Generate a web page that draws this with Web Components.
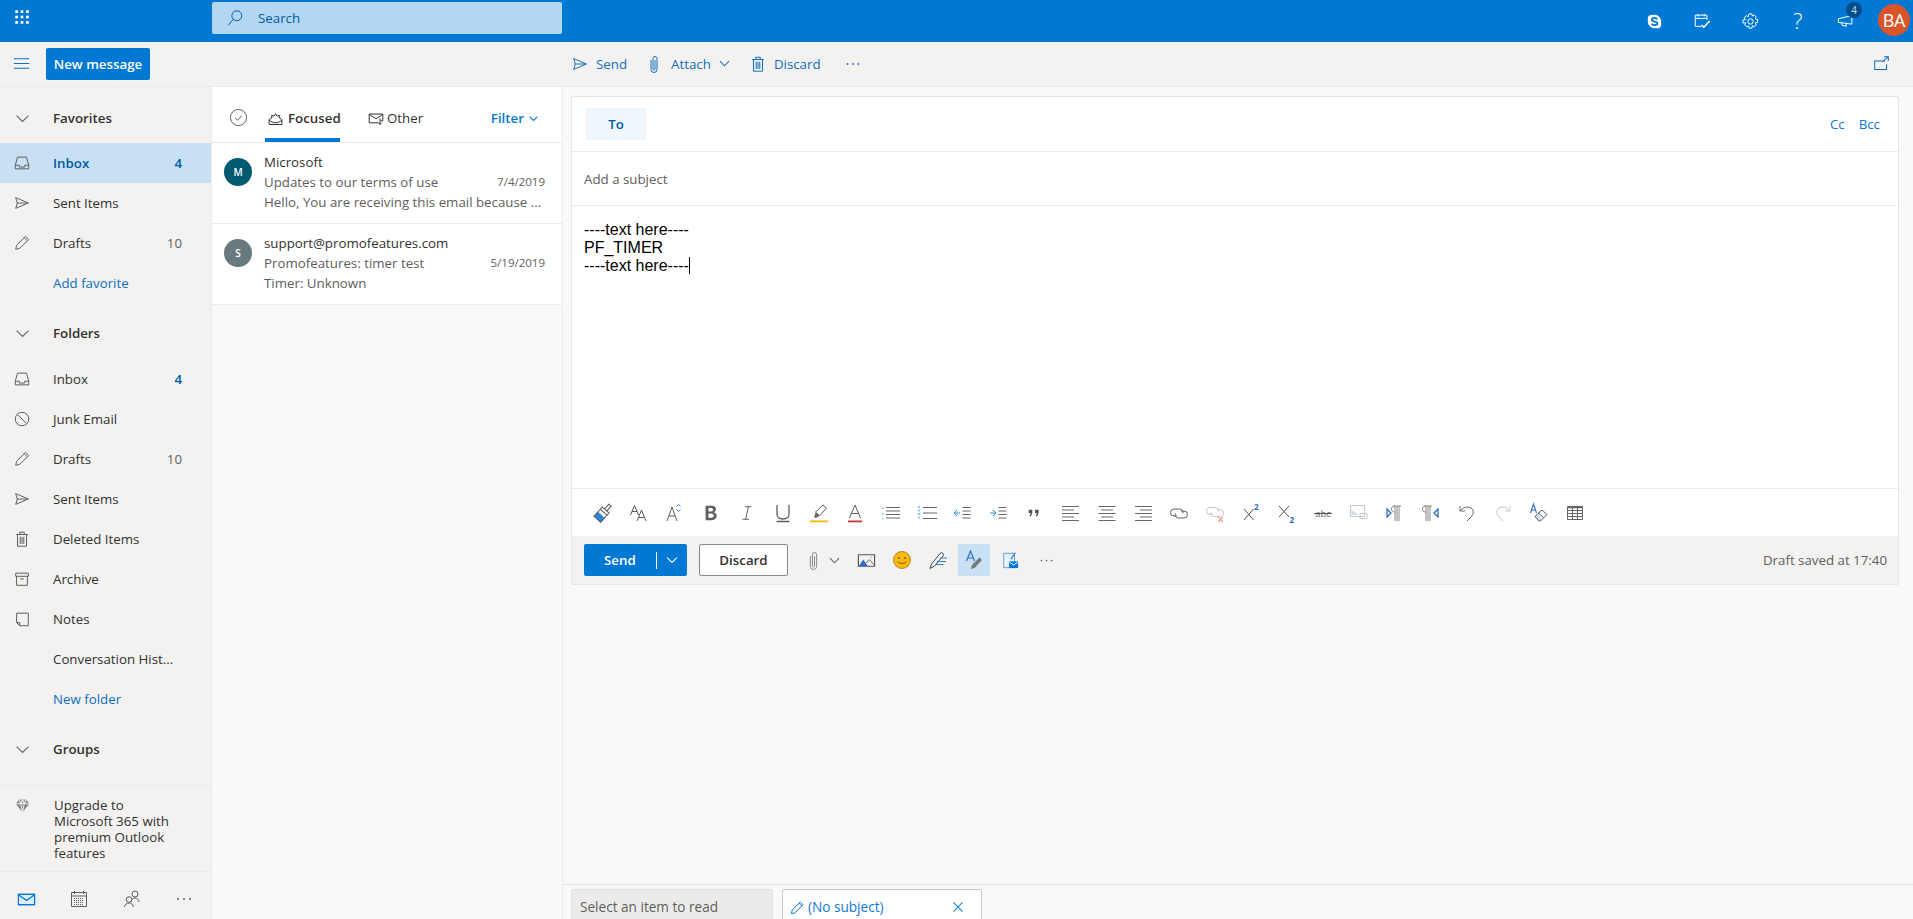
<!DOCTYPE html>
<html lang="en"><head><meta charset="utf-8"><title>Mail</title>
<style>
html,body{margin:0;padding:0;height:919px;overflow:hidden;background:#faf9f8;font-family:"Open Sans","Noto Sans",sans-serif;font-size:13.3px;color:#323130}
</style></head><body>
<x-app></x-app>
<script>
const S=(d,extra='')=>`<path d="${d}" ${extra}/>`;
const ICONS={
waffle:[...Array(9)].map((_,i)=>`<rect x="${2.5+(i%3)*6}" y="${2.5+Math.floor(i/3)*6}" width="3" height="3" fill="currentColor" stroke="none"/>`).join(''),
search:`<circle cx="12" cy="7.5" r="5.5"/>`+S('M8 11.5L2.5 18'),
hamburger:S('M1 4.5h18M1 10h18M1 15.5h18'),
chevron:S('M3 6.5l7 7 7-7'),
inbox:S('M5 3.5h10l2.5 9v4h-15v-4zM2.5 12.5h4.5v2h6v-2h4.5'),
send:S('M3 4l14 6-14 6 1.8-6zM4.8 10H17'),
pencil:S('M3 17l1-4.5L14 2.5l3.5 3.5-10 10zM12.5 4l3.5 3.5'),
junk:`<circle cx="10" cy="10" r="7.5"/>`+S('M4.8 4.8l10.4 10.4'),
trash:S('M3.5 5h13M7.5 5V2.5h5V5M5 5v13h10V5M8 7.5v8M10 7.5v8M12 7.5v8'),
archive:S('M3 3.5h14v3.5H3zM4 7v10h12V7M8 10h4'),
notes:S('M4 3.5h13v14H7.5L4 14zM4 14h3.5v3.5'),
gem:`<path fill="currentColor" stroke="none" d="M6 3h8l4 5-8 10-8-10z" opacity=".75"/><path stroke="#f3f2f1" d="M2 8h16M6 3l2 5 2 10 2-10 2-5M8 8l2-5 2 5"/>`,
mail:`<rect x="1.5" y="4.5" width="17" height="11" fill="#deecf9"/>`+S('M1.5 4.5h17v11h-17zM1.5 5l8.5 6 8.5-6','stroke-width="1.3"'),
calendar:S('M2.5 3.5h15v14h-15zM2.5 7h15M5.5 2v3M14.5 2v3')+`<path stroke-dasharray="1 1" d="M5 9.5h10M5 11.5h10M5 13.5h10M5 15.5h10"/>`,
people:`<circle cx="13" cy="5" r="3"/>`+S('M9 13c.5-2.500 2-4 4-4s3.800 1.500 4 4')+`<circle cx="7" cy="10.500" r="2.800"/>`+S('M2.500 18c.300-2.500 2-4 4.500-4s4 1.500 4.300 4'),
dots:`<circle cx="4" cy="10" r="1" fill="currentColor" stroke="none"/><circle cx="10" cy="10" r="1" fill="currentColor" stroke="none"/><circle cx="16" cy="10" r="1" fill="currentColor" stroke="none"/>`,
circlecheck:`<circle cx="10" cy="10" r="8.500"/>`+S('M6.500 10.500l2.500 2.500 4.500-5'),
focused:S('M1.500 11.500l3.500-2.500M18.500 11.500l-3.500-2.500M1.500 11.500v6.500h17v-6.500M1.500 12.500l5.500 3h6l5.500-3M5 9.500V5.500l3 1.500 2-3.500 2 3.500 3-1.500v4'),
other:S('M16 13.500h2.500V5H1.500v11H13M1.500 5.500L10 11l8.500-5.500M15 10.500V18M13 16l2 2 2-2'),
clip:S('M7 6v9.500a3 3 0 0 0 6 0V4.500a2 2 0 0 0-4 0V15a1 1 0 0 0 2 0V6'),
popout:S('M14 7H2v10h14v-6M11 8l7-6M13 2h5v5'),
skype:`<path fill="currentColor" stroke="none" d="M6.500 2a4.500 4.500 0 0 0-4.200 6.200A8 8 0 0 0 11.800 17.700 4.500 4.500 0 0 0 17.700 11.800 8 8 0 0 0 8.200 2.300 4.500 4.500 0 0 0 6.500 2z"/><path stroke="#0078d4" stroke-width="2.200" d="M13.300 7.300c-.7-1-1.900-1.400-3.300-1.400-1.700 0-3 .7-3 2 0 2.900 6.500 1.500 6.500 4.300 0 1.300-1.400 2-3.400 2-1.500 0-2.700-.5-3.500-1.600"/>`,
calcheck:S('M9 16H2.500V3.500h13V9M2.500 7h13M5.500 2v3M12.500 2v3')+S('M9.500 14.500l2.500 2.500 6.500-7','stroke-width="1.800"'),
gear:`<circle cx="10" cy="10" r="2.800"/>`+S('M8.500 2h3l.5 2.300 2-1.100 2.100 2.100-1.100 2 2.500.6v3l-2.500.6 1.100 2-2.100 2.100-2-1.100-.5 2.500h-3l-.5-2.500-2 1.100-2.100-2.100 1.100-2L2 11.500v-3l2.500-.6-1.100-2 2.100-2.100 2 1.100z'),
feedback:S('M1.500 7.500l15-3.500v9.500l-15-2zM5 12l.7 2.800 4.700 1-.5-3.500'),
close:S('M3.500 3.500l13 13M16.500 3.500l-13 13'),
brush:`<g transform="rotate(42 10 10)"><path fill="#2b88d8" stroke="none" d="M5.500 12.500h9v6h-9z"/><path stroke="#555" d="M8.500 -.5h3v6.500h-3zM5.500 6h9v3h-9zM5.500 9v9.500h9V9"/></g>`,
aa:`<path stroke="#555" d="M1.500 12L5.500 2.500 9.500 12M3 8.500h5M8 18L12.500 7 17 18M9.500 14.500h6"/>`,
agrow:S('M2 18L7 4l5 14M4 13h6')+`<path stroke="#2b88d8" d="M11.500 3.500L13.500 1.500l2 2M11.500 6.500l2 2 2-2"/>`,
bold:`<path fill="currentColor" stroke="none" d="M4 2h7c3 0 4.500 1.500 4.500 3.800 0 1.700-1 2.900-2.500 3.400 2 .4 3.300 1.800 3.300 3.900 0 3-2.300 4.900-5.300 4.900H4zm3.200 2.500v3.700h2.800c1.500 0 2.300-.7 2.300-1.900s-.8-1.800-2.300-1.800zm0 6v4.900h3c1.800 0 2.800-.9 2.800-2.500s-1-2.400-2.900-2.400z"/>`,
italic:S('M8 3h7M5 17h7M11.500 3l-3 14'),
underline:S('M4 2v9c0 3.500 2.500 5 6 5s6-1.500 6-5V2M3.500 18.500h13','stroke-width="1.300"'),
highlight:`<path fill="#666" stroke="none" d="M5 14l2-5 4 3.500-4 2.500z"/>`+S('M6 9.500L14 2l3.500 3-6.500 7.500')+`<rect x="1" y="17.500" width="18" height="1.800" fill="#ffb900" stroke="none"/>`,
fontcolor:S('M4.500 15L10 2l5.500 13M6.500 10.500h7')+`<rect x="3" y="17.500" width="14" height="1.800" fill="#d13438" stroke="none"/>`,
bullets:`<path stroke="#2b88d8" stroke-dasharray="1.500 4" d="M1.800 4.500v12"/><path stroke="#666" stroke-width="1.200" d="M5 4.500h14M5 8h14M5 11.500h14M5 15h14"/>`,
numbers:`<path stroke="#2b88d8" stroke-dasharray="2 1.500" d="M2 3v14"/><path stroke="#666" stroke-width="1.200" d="M6 4.500h14M6 10h14M6 15.500h14"/>`,
outdent:`<path stroke="#2b88d8" d="M7 10H1M4 7l-3 3 3 3"/><path stroke="#666" stroke-width="1.200" d="M9.500 4.500h8M9.500 8h8M9.500 11.500h8M9.500 15h8"/>`,
indent:`<path stroke="#2b88d8" d="M1 10h6M4 7l3 3-3 3"/><path stroke="#666" stroke-width="1.200" d="M9.500 4.500h8M9.500 8h8M9.500 11.500h8M9.500 15h8"/>`,
quote:`<path fill="#555" stroke="none" d="M3 6.500h4v3.500l-1.500 3.500H4L5 10H3zM10 6.500h4v3.500l-1.500 3.500H11L12 10h-2z"/>`,
alignl:`<path stroke="#666" stroke-width="1.200" d="M1 3.500h17M1 7h12M1 10.500h17M1 14h12M1 17.500h17"/>`,
alignc:`<path stroke="#666" stroke-width="1.200" d="M1.500 3.500h17M4 7h12M1.500 10.500h17M4 14h12M1.500 17.500h17"/>`,
alignr:`<path stroke="#666" stroke-width="1.200" d="M2 3.500h17M7 7h12M2 10.500h17M7 14h12M2 17.500h17"/>`,
link:S('M8 13H5a3.500 3.500 0 0 1 0-7h5.500a3.500 3.500 0 0 1 3.300 4.500M12 8h3a3.500 3.500 0 0 1 0 7H9.500A3.500 3.500 0 0 1 6.200 10.500'),
unlink:`<g stroke="#c8c6c4"><path d="M8 11.500H5a3.500 3.500 0 0 1 0-7h5.500a3.500 3.500 0 0 1 3.300 4.500M12 6.500h3a3.500 3.500 0 0 1 0 7H9.500A3.500 3.500 0 0 1 6.200 9"/></g><path stroke="#e8a19d" stroke-width="1.300" d="M13 14l5 5M18 14l-5 5"/>`,
sup:S('M3 6l9.500 11M12.500 6L3 17','stroke="#555"')+`<text x="13" y="7" font-size="8" font-weight="700" fill="#2b6cc4" stroke="none" font-family="Open Sans">2</text>`,
sub:S('M2 3l10 11M12 3L2 14','stroke="#555"')+`<text x="12.500" y="19.500" font-size="8" font-weight="700" fill="#2b6cc4" stroke="none" font-family="Open Sans">2</text>`,
strike:`<text x="10" y="13.500" font-size="9.500" text-anchor="middle" fill="#666" stroke="none" font-family="Open Sans">abc</text><path stroke="#555" d="M1 10.500h18"/>`,
imgalt:`<path stroke="#c8c6c4" d="M1.500 2.500h14v11h-14zM11 10.500h7v5h-7z"/><path fill="#c7e0f4" stroke="none" d="M2.500 12V7l3 2 4 3z"/>`,
ltr:`<path stroke="#888" d="M8 3h8M10 3v15M14 3v15M10 9C7.500 9 6.500 7.500 6.500 6S7.500 3 10 3M12 3v15"/><path stroke="#2b6cc4" stroke-width="1.300" d="M2 6v8l4-4z"/>`,
rtl:`<path stroke="#888" d="M3 3h8M5 3v15M9 3v15M5 9C2.500 9 1.500 7.500 1.500 6S2.500 3 5 3M7 3v15"/><path stroke="#2b6cc4" stroke-width="1.300" d="M17 6v8l-4-4z"/>`,
undo:S('M3 3v5h5M3 8c3-4 8-5 11-3 3 2 3 6 0 9l-4 4','stroke="#666"'),
redo:S('M17 3v5h-5M17 8c-3-4-8-5-11-3-3 2-3 6 0 9l4 4','stroke="#c8c6c4"'),
eraser:`<path stroke="#2b6cc4" stroke-width="1.100" d="M1.500 10L4.500 1l3 9M2.600 7h3.800"/><path fill="#c7e0f4" stroke="none" d="M6 13.500l4 4 3-1-3.500-5.500z"/><path stroke="#555" d="M6 13.500L13 7l5 4.500-6.500 6.500H10zM9.500 10l5 4.500"/>`,
table:`<path stroke="#666" d="M2.500 3.500h15v13h-15zM2.500 7.500h15M2.500 10.500h15M2.500 13.500h15M7.500 3.500v13M12.500 3.500v13"/><path stroke="#666" stroke-width="1.500" d="M2.500 4.500h15"/>`,
image:`<path stroke="#555" stroke-width="1.200" d="M1.500 4h17v12h-17z"/><path fill="#2b6cc4" stroke="none" d="M2 16l4.500-7 5 7z"/><path fill="none" stroke="#666" d="M8.500 13.500L13 9l5.500 6"/><circle cx="15" cy="6.500" r=".8" fill="#aaa" stroke="none"/>`,
emoji:`<circle cx="10" cy="10" r="8.500" fill="#f8b912" stroke="#8a6a00" stroke-width=".7"/><circle cx="7" cy="8" r=".9" fill="#7a5a00" stroke="none"/><circle cx="13" cy="8" r=".9" fill="#7a5a00" stroke="none"/><path stroke="#7a5a00" d="M5.500 11.500c1 2.500 8 2.500 9 0"/>`,
signature:S('M2 18.500l1.500-4.500L12 3.500a1.800 1.800 0 0 1 3 2.500L6.500 16z','stroke="#444"')+`<path stroke="#2b88d8" d="M12 8h7M9 11.500h9M7.500 14.500h8"/>`,
apen:`<path stroke="#2b6cc4" stroke-width="1.200" d="M2.500 11L6.500 1l4 10M3.800 8h5.400"/><path fill="#777" stroke="none" d="M7 19l1-4 7.500-7.500 2.500 2.500-7.500 8z"/>`,
sens:`<path stroke="#5ba7e0" d="M3 2.500h12v16H3z" fill="#e6f1fb"/><path fill="#0078d4" stroke="none" d="M9 11.500h10v7.500H9z"/><path stroke="#fff" d="M9.500 12.500l4.500 3 4.500-3"/><path stroke="#2b6cc4" stroke-width="1.200" d="M11 9l5-7"/>`
};
function def(name,html,init){customElements.define(name,class extends HTMLElement{
  constructor(){super();this.attachShadow({mode:'open'}).innerHTML=html;}
  connectedCallback(){init&&init.call(this,this.shadowRoot);}
});}
customElements.define('x-icon',class extends HTMLElement{
  constructor(){super();this.attachShadow({mode:'open'});}
  connectedCallback(){const s=+(this.getAttribute('size')||18);
   this.shadowRoot.innerHTML=`<style>:host{display:inline-flex;width:${s}px;height:${s}px;flex:none}svg{display:block;width:100%;height:100%;overflow:visible}</style><svg viewBox="0 0 20 20" fill="none" stroke="currentColor" stroke-width="${(20/s).toFixed(2)}" stroke-linejoin="miter" aria-hidden="true">${ICONS[this.getAttribute('name')]||''}</svg>`;}
});
def('x-cell',`<style>:host{display:flex;align-items:center;justify-content:center;flex:none;width:var(--w,36px);height:var(--h,100%)}</style><slot></slot>`);

def('x-topbar',`<style>
:host{display:flex;height:42px;background:#0078d4;color:#fff;align-items:center;flex:none;--h:42px}
.waffle{width:44px;margin-bottom:8px;display:flex;justify-content:center;}
.box{margin-left:168px;width:350px;height:32px;margin-top:-6px;background:#b3d6f2;border-radius:2px;display:flex;align-items:center;color:#005a9e;box-sizing:border-box;padding-left:14px}
.box span{margin-left:14px}
.right{margin-left:auto;display:flex;align-items:center;height:42px;--w:48px;padding-right:3px}
.fb{position:relative}
.badge{position:absolute;top:2px;left:24px;width:16px;height:16px;border-radius:50%;background:#004c87;color:#c7e0f4;font-size:10px;display:flex;align-items:center;justify-content:center}
.av{width:32px;height:32px;border-radius:50%;background:#d9542b;color:#fff;font-size:18px;display:flex;align-items:center;justify-content:center;margin-left:8px;margin-top:-2px;letter-spacing:-.2px}
.q{font-size:22px;font-weight:300;margin-top:-3px}
</style>
<div class="waffle"><x-icon name="waffle" size="18"></x-icon></div>
<div class="box"><x-icon name="search" size="18"></x-icon><span>Search</span></div>
<div class="right">
<x-cell><x-icon name="skype" size="17"></x-icon></x-cell>
<x-cell><x-icon name="calcheck" size="18"></x-icon></x-cell>
<x-cell><x-icon name="gear" size="19"></x-icon></x-cell>
<x-cell class="q">?</x-cell>
<x-cell class="fb"><x-icon name="feedback" size="18"></x-icon><span class="badge">4</span></x-cell>
<span class="av">BA</span>
</div>`);

def('x-cmdbtn',`<style>:host{display:inline-flex;align-items:center;color:#106ebe;gap:7px}</style><slot></slot>`);
def('x-cmdbar',`<style>
:host{display:flex;align-items:center;height:45px;background:#f3f2f1;flex:none;border-bottom:1px solid #edebe9;box-sizing:border-box;color:#106ebe;padding-bottom:1px}
.l{width:212px;display:flex;align-items:center;flex:none;box-sizing:border-box;padding-left:13px;margin-right:351px}
.nm{margin-left:16px;width:104px;height:32px;background:#0078d4;color:#fff;border-radius:2px;display:flex;align-items:center;justify-content:center;font-weight:600}
.m{display:flex;align-items:center;padding-left:8px;gap:18px;flex:1}
.p{margin-right:23px}
</style>
<div class="l"><x-icon name="hamburger" size="17"></x-icon><span class="nm">New message</span></div>
<div class="m">
<x-cmdbtn style="margin-right:-1px"><x-icon name="send" size="18"></x-icon>Send</x-cmdbtn>
<x-cmdbtn><x-icon name="clip" size="20"></x-icon>Attach<x-icon name="chevron" size="13"></x-icon></x-cmdbtn>
<x-cmdbtn><x-icon name="trash" size="18"></x-icon>Discard</x-cmdbtn>
<x-icon name="dots" size="18" style="margin-left:5px"></x-icon>
</div>
<x-icon class="p" name="popout" size="17"></x-icon>`);

customElements.define('x-nav-item',class extends HTMLElement{
 constructor(){super();this.attachShadow({mode:'open'});}
 connectedCallback(){const a=n=>this.getAttribute(n);
  this.shadowRoot.innerHTML=`<style>
  :host{display:flex;align-items:center;height:40px;flex:none;color:#323130}
  :host([sel]){background:#c7e0f4;color:#005a9e;font-weight:600}
  :host([head]){font-weight:600}
  :host([link]){color:#106ebe}
  .i{width:53px;display:flex;justify-content:center;flex:none;padding-right:9px;box-sizing:border-box;color:#605e5c}
  .t{flex:1;white-space:nowrap}
  .c{padding-right:29px;color:#605e5c}
  .u{color:#005a9e;font-weight:600}
  </style><span class="i">${a('icon')?`<x-icon name="${a('icon')}" size="${a('head')!==null?17:18}"></x-icon>`:''}</span><span class="t"><slot></slot></span>${a('count')?`<span class="c ${a('unread')!==null?'u':''}">${a('count')}</span>`:''}`;}
});
def('x-nav',`<style>
:host{display:flex;flex-direction:column;width:212px;flex:none;background:#f3f2f1;padding-top:11px;box-sizing:border-box;border-right:1px solid #edebe9;height:832px}
.upg{margin-top:15px;border-top:1px solid #edebe9;border-bottom:1px solid #edebe9;height:92px;box-sizing:border-box;display:flex;padding-top:11px;line-height:16px;color:#323130}
.upg .i{width:54px;display:flex;justify-content:center;align-items:flex-start;padding-right:9px;box-sizing:border-box;color:#605e5c}
.upg .t{white-space:nowrap}
.bot{display:flex;color:#605e5c;flex:1;align-items:center;padding-top:7px}
.bot x-cell{--w:52.700px;--h:40px}
.g5{height:5px;flex:none}.g10{height:10px;flex:none}
.g6{height:6px;flex:none}
</style>
<x-nav-item head icon="chevron">Favorites</x-nav-item><div class="g5"></div>
<x-nav-item sel icon="inbox" count="4" unread>Inbox</x-nav-item>
<x-nav-item icon="send">Sent Items</x-nav-item>
<x-nav-item icon="pencil" count="10">Drafts</x-nav-item>
<x-nav-item link>Add favorite</x-nav-item><div class="g10"></div>
<x-nav-item head icon="chevron">Folders</x-nav-item><div class="g6"></div>
<x-nav-item icon="inbox" count="4" unread>Inbox</x-nav-item>
<x-nav-item icon="junk">Junk Email</x-nav-item>
<x-nav-item icon="pencil" count="10">Drafts</x-nav-item>
<x-nav-item icon="send">Sent Items</x-nav-item>
<x-nav-item icon="trash">Deleted Items</x-nav-item>
<x-nav-item icon="archive">Archive</x-nav-item>
<x-nav-item icon="notes">Notes</x-nav-item>
<x-nav-item>Conversation Hist...</x-nav-item>
<x-nav-item link>New folder</x-nav-item><div class="g10"></div>
<x-nav-item head icon="chevron">Groups</x-nav-item>
<div class="upg" style="margin-top:16px"><span class="i"><x-icon name="gem" size="17"></x-icon></span><span class="t">Upgrade to<br>Microsoft 365 with<br>premium Outlook<br>features</span></div>
<div class="bot"><x-cell style="color:#0078d4"><x-icon name="mail" size="19"></x-icon></x-cell><x-cell><x-icon name="calendar" size="20"></x-icon></x-cell><x-cell><x-icon name="people" size="20"></x-icon></x-cell><x-cell><x-icon name="dots" size="20"></x-icon></x-cell></div>`);

customElements.define('x-msg',class extends HTMLElement{
 constructor(){super();this.attachShadow({mode:'open'});}
 connectedCallback(){const a=n=>this.getAttribute(n);
  this.shadowRoot.innerHTML=`<style>
  :host{display:flex;height:81px;box-sizing:border-box;border-bottom:1px solid #edebe9;background:#fff;flex:none;position:relative}
  .a{width:28px;height:28px;border-radius:50%;background:${a('color')};color:#fff;font-size:10px;font-weight:600;display:flex;align-items:center;justify-content:center;margin:15px 12px 0 12px;flex:none}
  .b{flex:1;min-width:0;padding:9px 17px 0 0;line-height:20px;color:#605e5c}
  .s{color:#323130}
  .r{display:flex;justify-content:space-between;align-items:center;white-space:nowrap}
  .d{font-size:11.5px}
  .p{white-space:nowrap}
  </style><div class="a">${a('letter')}</div><div class="b"><div class="s">${a('from')}</div><div class="r"><span>${a('subject')}</span><span class="d">${a('date')}</span></div><div class="p">${a('preview')}</div></div>`;}
});
def('x-msglist',`<style>
:host{display:flex;flex-direction:column;width:351px;flex:none;background:#faf9f8;box-sizing:border-box;border-right:1px solid #edebe9}
.h{height:56px;background:#fff;border-bottom:1px solid #edebe9;box-sizing:border-box;display:flex;align-items:center;padding-left:17px;color:#323130;flex:none}
.c{margin-top:5px;color:#605e5c}
.t{display:flex;align-items:center}
.f{font-weight:600;margin-left:17px;height:55px;box-shadow:inset 0 -4px 0 #0078d4;width:75px;padding:7px 0 0 3px;box-sizing:border-box;gap:5px;align-self:flex-start}
.o{margin-left:28px;margin-top:7px;gap:3px}
.fl{margin-left:auto;margin-right:23px;margin-top:7px;color:#0078d4;font-weight:600;display:flex;align-items:center;gap:4px}
</style><div class="h"><x-icon class="c" name="circlecheck" size="19"></x-icon>
<span class="t f"><x-icon name="focused" size="15"></x-icon>Focused</span>
<span class="t o"><x-icon name="other" size="16"></x-icon>Other</span>
<span class="fl">Filter<x-icon name="chevron" size="11"></x-icon></span></div>
<x-msg color="#005b70" letter="M" from="Microsoft" subject="Updates to our terms of use" date="7/4/2019" preview="Hello, You are receiving this email because ..."></x-msg>
<x-msg color="#69797e" letter="S" from="support@promofeatures.com" subject="Promofeatures: timer test" date="5/19/2019" preview="Timer: Unknown"></x-msg>`);

def('x-fmtbar',`<style>
:host{display:flex;align-items:center;height:47px;padding-left:13px;background:#fff;border-top:1px solid #edebe9;flex:none;color:#605e5c;--h:47px}
</style><span id="r" style="display:contents"></span>`,function(s){
 const names='brush aa agrow bold italic underline highlight fontcolor bullets numbers outdent indent quote alignl alignc alignr link unlink sup sub strike imgalt ltr rtl undo redo eraser table'.split(' ');
 s.getElementById('r').innerHTML=names.map(n=>`<x-cell><x-icon name="${n}" size="${['bold','italic','quote'].includes(n)?18:20}"></x-icon></x-cell>`).join('');
});
def('x-actionbar',`<style>
:host{display:flex;align-items:center;height:48px;background:#f3f2f1;padding:0 11px 0 12px;flex:none;box-sizing:border-box;color:#605e5c}
.send{width:103px;height:32px;background:#0078d4;border-radius:2px;color:#fff;font-weight:600;display:flex;align-items:center;box-sizing:border-box;padding-left:20px}
.send i{width:1px;height:17px;background:#fff;margin-left:20px}
.send x-icon{margin-left:8px}
.disc{width:89px;height:32px;margin-left:12px;background:#fff;border:1px solid #8a8886;border-radius:2px;box-sizing:border-box;color:#323130;font-weight:600;display:flex;align-items:center;justify-content:center}
.tools{display:flex;align-items:center;margin-left:10px;--h:32px}
.sel{background:#c7e0f4;border-radius:1px}
.sv{margin-left:auto}
.clip{color:#888}
</style><span class="send">Send<i></i><x-icon name="chevron" size="14"></x-icon></span><span class="disc">Discard</span>
<span class="tools"><x-cell class="clip" style="--w:30px"><x-icon name="clip" size="21"></x-icon></x-cell><x-icon name="chevron" size="13" style="margin-right:7px"></x-icon>
<x-cell><x-icon name="image" size="19"></x-icon></x-cell><x-cell><x-icon name="emoji" size="20"></x-icon></x-cell><x-cell><x-icon name="signature" size="20"></x-icon></x-cell><x-cell class="sel" style="--w:32px;margin:0 2px"><x-icon name="apen" size="20"></x-icon></x-cell><x-cell><x-icon name="sens" size="18"></x-icon></x-cell><x-cell><x-icon name="dots" size="17"></x-icon></x-cell></span>
<span class="sv">Draft saved at 17:40</span>`);

def('x-composer',`<style>
:host{display:block;background:#fff;border:1px solid #e8e6e4;border-radius:2px;box-sizing:border-box;flex:none}
.to{height:55px;display:flex;align-items:center;border-bottom:1px solid #edebe9;box-sizing:border-box;padding:0 18px 0 14px}
.tb{width:60px;height:32px;background:#eff6fc;color:#005a9e;font-weight:600;border-radius:2px;display:flex;align-items:center;justify-content:center}
.cc{margin-left:auto;color:#0f78d0;display:flex;gap:14px}
.sj{height:54px;border-bottom:1px solid #edebe9;box-sizing:border-box;display:flex;align-items:center;padding-left:12px;color:#605e5c}
.bd{height:282px;box-sizing:border-box;padding:15px 12px;font:16px/18px "Liberation Sans",Arial,sans-serif;color:#000}
.bd .c{display:inline-block;width:1px;height:17px;background:#000;vertical-align:-3px}
</style><div class="to"><span class="tb">To</span><span class="cc"><span>Cc</span><span>Bcc</span></span></div>
<div class="sj">Add a subject</div>
<div class="bd">----text here----<br>PF_TIMER<br>----text here----<span class="c"></span></div>
<x-fmtbar></x-fmtbar><x-actionbar></x-actionbar>`);

def('x-tabs',`<style>
:host{display:flex;height:35px;flex:none;border-top:1px solid #e1dfdd;padding:4px 0 0 8px;box-sizing:border-box;gap:9px;overflow:hidden;font-size:13.6px}
.t{width:202px;height:40px;box-sizing:border-box;background:#edebe9;border:1px solid #e1dfdd;border-radius:2px 2px 0 0;padding:7px 0 0 8px;color:#605e5c;display:flex;gap:3px;line-height:20px}
.w{width:200px;background:#fff;border-color:#c8c6c4;padding-left:6px;align-items:flex-start;color:#0f7bd6}
.w x-icon.p{margin-top:3px}
.w x-icon.x{margin-left:auto;margin-right:16px;margin-top:3px}
</style><div class="t">Select an item to read</div><div class="t w"><x-icon class="p" name="pencil" size="16"></x-icon>(No subject)<x-icon class="x" name="close" size="14"></x-icon></div>`);

def('x-app',`<style>
:host{display:flex;flex-direction:column;height:919px;width:1913px;overflow:hidden}
.main{display:flex;flex:1;min-height:0}
.read{flex:1;display:flex;flex-direction:column;min-width:0;background:#faf9f8;padding-top:9px;box-sizing:border-box}
.sp{flex:1}
x-composer{margin:0 14px 0 8px}
</style><x-topbar></x-topbar><x-cmdbar></x-cmdbar>
<div class="main"><x-nav></x-nav><x-msglist></x-msglist><div class="read"><x-composer></x-composer><div class="sp"></div><x-tabs></x-tabs></div></div>`);
</script></body></html>
